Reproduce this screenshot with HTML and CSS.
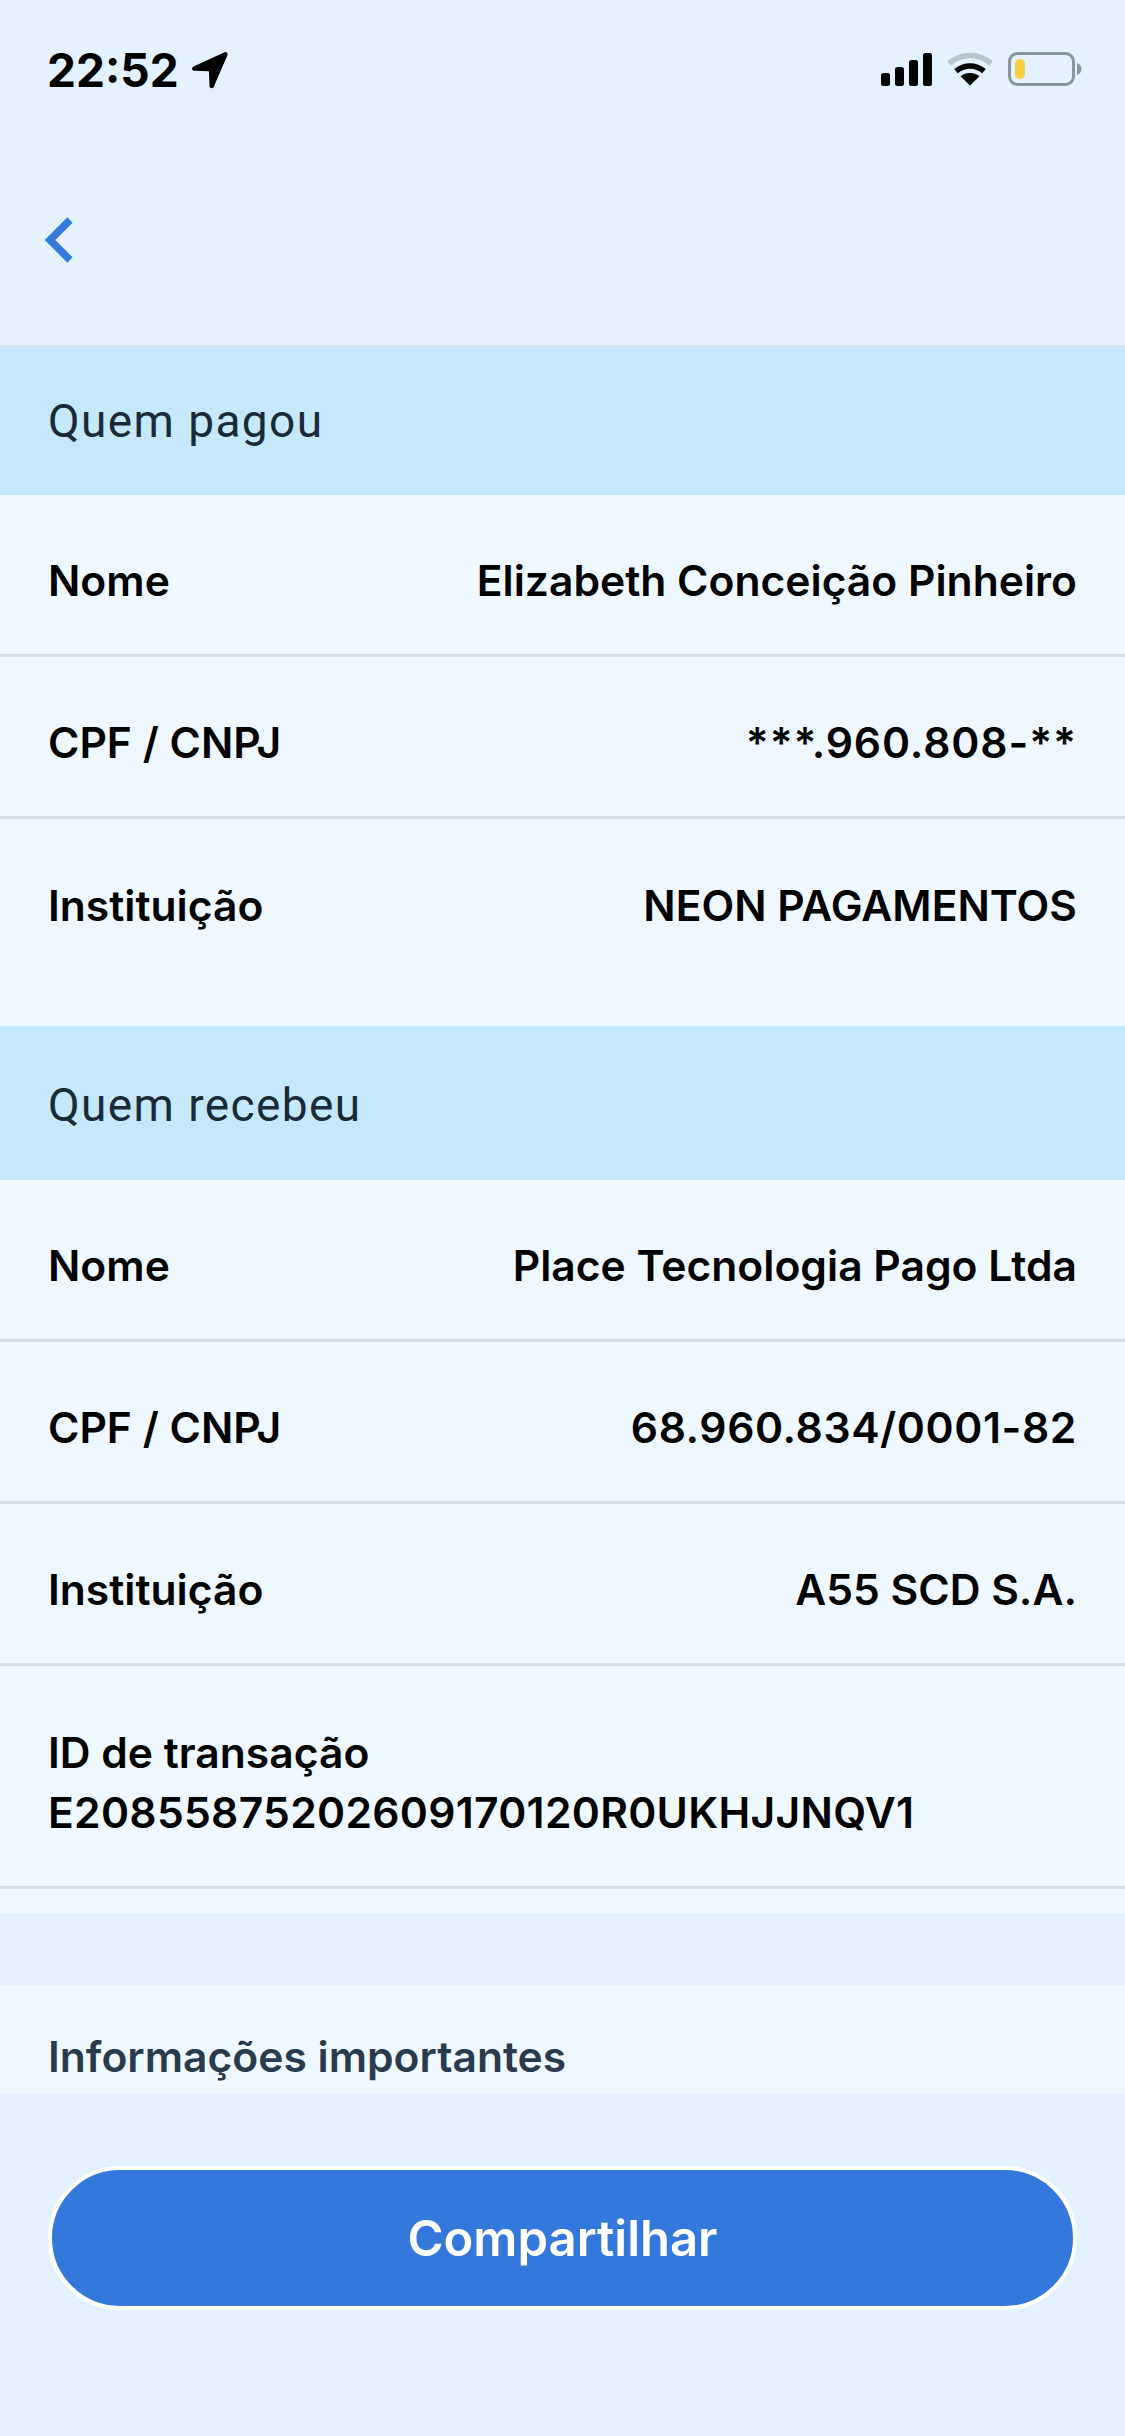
FILE: index.html
```html
<!DOCTYPE html>
<html lang="pt-BR">
<head>
<meta charset="utf-8">
<title>Comprovante</title>
<link rel="stylesheet" href="styles.css">
</head>
<body>
<div class="screen">
  <header class="top">
    <div class="status">
      <div class="status-left">
        <span class="time">22:52</span>
        <svg class="loc" viewBox="0 0 38 38" width="38" height="38"><path d="M33.500 1.300 2.600 15.400c-2.400 1.100-1.700 4.300.8 4.400l13.600.4c.6 0 1 .4 1 1l.5 13.700c.1 2.500 3.300 3.100 4.300.8L36.400 4.200c.8-1.800-1.100-3.700-2.900-2.900Z" fill="#000"/></svg>
      </div>
      <div class="status-right">
        <svg class="signal" viewBox="0 0 51 33" width="51" height="33"><rect x="0" y="20" width="9" height="13" rx="2.500"/><rect x="14" y="14" width="9" height="19" rx="2.500"/><rect x="28" y="7" width="9" height="26" rx="2.500"/><rect x="42" y="0" width="9" height="33" rx="2.500"/></svg>
        <svg class="wifi" viewBox="0 0 46 34" width="46" height="34"><path d="M2 11.500C14 .8 32 .8 44 11.500" fill="none" stroke="#b9c6cd" stroke-width="5.500"/><path d="M9 19.200c8.500-7 19.500-7 28 0" fill="none" stroke="#000" stroke-width="5.500"/><path d="M23 33.500 13.500 24.200c5.500-4.200 13.500-4.200 19 0Z" fill="#000"/></svg>
        <svg class="battery" viewBox="0 0 74 34" width="74" height="34"><rect x="1.500" y="1.500" width="64" height="31" rx="8" fill="none" stroke="#8a959d" stroke-width="3"/><rect x="7" y="7" width="10" height="20" rx="5" fill="#f7cf45"/><path d="M69 11c3 1 4.500 3.400 4.500 6s-1.500 5-4.500 6Z" fill="#8a959d"/></svg>
      </div>
    </div>
    <nav class="nav">
      <svg class="back" viewBox="0 0 30 48" width="30" height="48"><path d="M26 4 6 24l20 20" fill="none" stroke="#367ADC" stroke-width="7.500"/></svg>
    </nav>
  </header>

  <main class="scroll">
    <section class="card">
      <h2 class="section-title">Quem pagou</h2>
      <div class="row"><span>Nome</span><span>Elizabeth Conceição Pinheiro</span></div>
      <div class="row"><span>CPF / CNPJ</span><span class="num-wide">***.960.808-**</span></div>
      <div class="row row-last"><span>Instituição</span><span>NEON PAGAMENTOS</span></div>
      <h2 class="section-title section-title-tall">Quem recebeu</h2>
      <div class="row"><span>Nome</span><span>Place Tecnologia Pago Ltda</span></div>
      <div class="row"><span>CPF / CNPJ</span><span class="num">68.960.834/0001-82</span></div>
      <div class="row"><span>Instituição</span><span>A55 SCD S.A.</span></div>
      <div class="row row-id"><span>ID de transação</span><span class="id-value">E20855875202609170120R0UKHJJNQV1</span></div>
      <div class="card-end"></div>
    </section>
    <section class="info">
      <h3 class="info-title">Informações importantes</h3>
    </section>
  </main>

  <footer class="footer">
    <button class="share" type="button">Compartilhar</button>
  </footer>
</div>
</body>
</html>
```

FILE: styles.css
```css
* { box-sizing: border-box; }
html, body { margin: 0; padding: 0; }
body { background: #E3F2FE; font-family: Inter, "Liberation Sans", sans-serif; }
.screen { width: 1125px; height: 2436px; display: flex; flex-direction: column; background: #E3F2FE; overflow: hidden; }

.top { height: 348px; flex: none; border-bottom: 3px solid #D9E4EC; }
.status { height: 138px; display: flex; justify-content: space-between; align-items: flex-start; padding: 48px 43px 0 47px; }
.status-left { display: flex; align-items: center; gap: 12px; }
.time { font-family: Inter, sans-serif; font-weight: 700; font-size: 46px; line-height: 44px; color: #000; }
.loc { display: block; }
.status-right { display: flex; align-items: center; gap: 15px; padding-top: 4px; }
.signal { display: block; fill: #000; }
.wifi, .battery { display: block; }
.nav { padding: 78px 0 0 44px; }
.back { display: block; }

.scroll { flex: 1; min-height: 0; overflow: hidden; }
.card { background: #F0F8FF; }
.section-title { margin: 0; height: 147px; background: #C6E8FD; padding: 0 48px 2px; display: flex; align-items: center; font-family: Roboto, sans-serif; font-weight: 400; font-size: 46px; letter-spacing: 1.4px; color: #1B2A38; }
.section-title-tall { height: 154px; padding: 3px 48px 0; }
.row { height: 162px; padding: 12px 48px 0; display: flex; align-items: center; justify-content: space-between; border-bottom: 3px solid #D5DFE8; font-weight: 600; font-size: 42.6px; color: #000; }
.num-wide { letter-spacing: 0.9px; }
.num { letter-spacing: 0.6px; }
.id-value { letter-spacing: 0.3px; }
.row-last { height: 207px; padding: 0 48px 35px; border-bottom: 0; }
.row-id { height: 223px; padding: 13px 48px 0; flex-direction: column; align-items: flex-start; justify-content: center; line-height: 60px; }
.card-end { height: 24px; }

.info { margin-top: 72px; background: #F0F8FF; height: 200px; padding: 46px 48px 0; }
.info-title { margin: 0; font-weight: 600; font-size: 42.6px; line-height: 52px; color: #2A3B4D; }

.footer { flex: none; height: 342px; background: #E3F2FE; padding: 72px 48px 0; }
.share { display: block; width: 100%; height: 144px; border: 4px solid #fff; border-radius: 72px; background: #3578DB; color: #fff; font-family: Inter, sans-serif; font-weight: 600; font-size: 49px; }
```
